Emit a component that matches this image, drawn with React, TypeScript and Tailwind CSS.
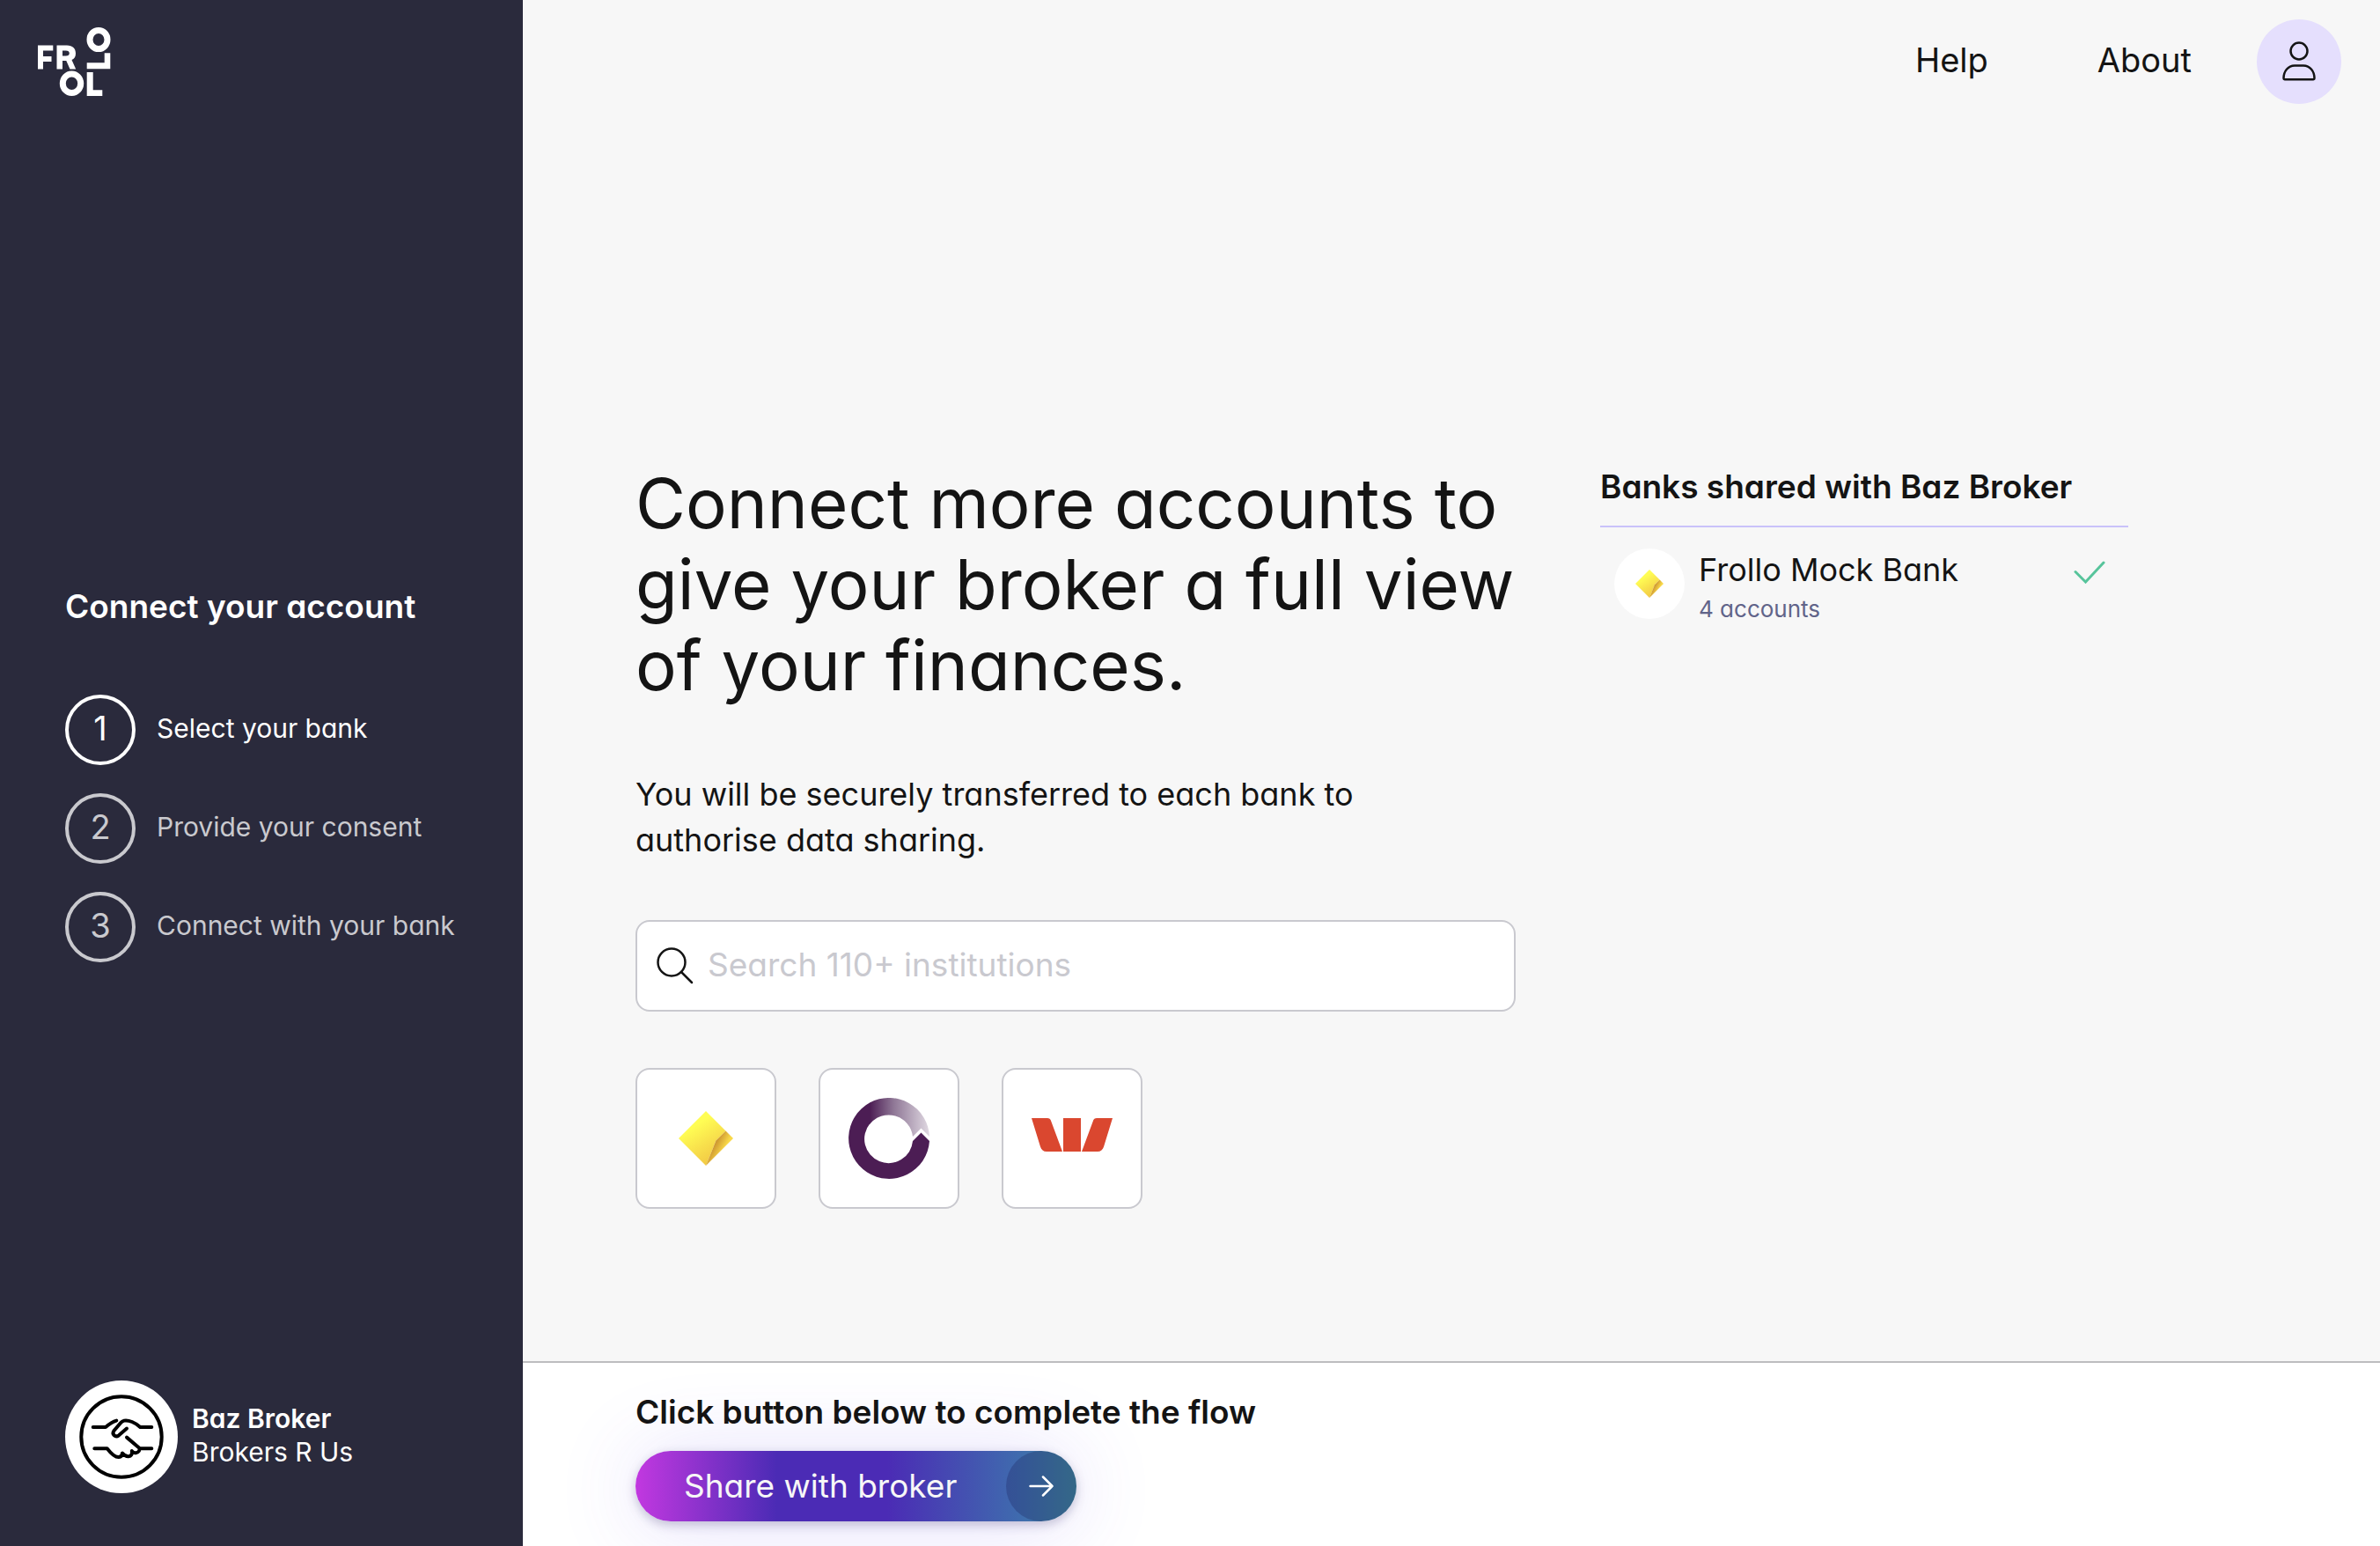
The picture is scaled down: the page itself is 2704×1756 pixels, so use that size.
import { useState } from "react";

const STEPS = ["Select your bank", "Provide your consent", "Connect with your bank"];

const FrolloLogo = () => (
    <svg viewBox="0 0 84 80" className="w-[84px] h-20" role="img" aria-label="Frollo">
        <g fill="#ffffff">
            <path d="M0 21.500h17.300v6H6v6.500h9.500v6H6v8.500H0z" />
            <path fillRule="evenodd" d="M21.500 21.500H33c6.500 0 10 3.500 10 9.200 0 4-1.800 6.300-4.500 7.300l4.700 10.500h-6.700L32.300 39h-4.300v9.500h-6.500zM28 27.500v6h3.800c2.600 0 4-1 4-3s-1.400-3-4-3z" />
            <path d="M82.300 30.300v18H55.700v-7h20v-11z" />
            <path d="M55.700 52h7v20.300h10.600V79H55.700z" />
        </g>
        <g fill="none" stroke="#ffffff" strokeWidth="7">
            <ellipse cx="38.500" cy="64.700" rx="10.200" ry="10.800" />
            <ellipse cx="69" cy="15" rx="10" ry="10.600" />
        </g>
    </svg>
);

const HandshakeIcon = () => (
    <svg viewBox="0 0 96 96" className="w-24 h-24" fill="none" stroke="#000000" strokeWidth="4" strokeLinecap="round" strokeLinejoin="round" aria-hidden="true">
        <circle cx="48" cy="48" r="45.700" />
        <path d="M15.700 37H30c4-3.500 7-6 12.300-7.400" />
        <path d="M82.300 37H69.300C64 32 56 28.500 51 29.600c-2 .5-3 1.400-4 2.600l-7.700 9.100c-2.500 3.500 1.700 8 5.700 5l9-7.700" />
        <path d="M54 48.600l14.300 12.100c1 2-.5 5-4 5.600-2 .2-3.500-.8-4.500-2.300.8 3.500-.8 6-3.800 6.200-3 .2-5-1.200-7-3.700-.2 2.500-1.500 4.300-4 4.600-4.500.4-8.500-3.600-13.300-9.800H17.300M69.300 61.300h13" />
    </svg>
);

const UserIcon = () => (
    <svg viewBox="0 0 40 46" className="w-10 h-[46px]" fill="none" stroke="#141414" strokeWidth="2.500" strokeLinejoin="round" aria-hidden="true">
        <circle cx="20" cy="11" r="9.500" />
        <path d="M2.500 42c0-8 5-14.500 12.500-14.500h10c7.500 0 12.500 6.500 12.500 14.500 0 .8-.5 1.200-1.200 1.200H3.700c-.7 0-1.200-.4-1.200-1.200z" />
    </svg>
);

interface DiamondLogoProps {
    className: string;
    id: string;
}

const DiamondLogo = ({ className, id }: DiamondLogoProps) => (
    <svg viewBox="0 0 62 62" className={className} aria-hidden="true">
        <defs>
            <linearGradient id={`${id}-face`} x1="0.3" y1="0.2" x2="0.7" y2="0.9">
                <stop offset="0.1" stopColor="#fffd54" />
                <stop offset="0.6" stopColor="#f8e04c" />
                <stop offset="1" stopColor="#f3cb45" />
            </linearGradient>
            <linearGradient id={`${id}-fold`} x1="0.3" y1="0.3" x2="0.65" y2="0.55">
                <stop offset="0" stopColor="#c58a2c" />
                <stop offset="1" stopColor="#f9d949" />
            </linearGradient>
        </defs>
        <path d="M31 0L53.500 22.500 42.500 33.500 31 62 0 31z" fill={`url(#${id}-face)`} />
        <path d="M53.500 22.500L62 31 31 62 42.500 33.500z" fill={`url(#${id}-fold)`} />
    </svg>
);

const RingLogo = () => (
    <svg viewBox="0 0 92 92" className="w-[92px] h-[92px]" aria-hidden="true">
        <defs>
            <linearGradient id="ring-fade" gradientUnits="userSpaceOnUse" x1="24" y1="0" x2="92" y2="0">
                <stop offset="0" stopColor="#4c1d54" />
                <stop offset="0.4" stopColor="#8f7796" />
                <stop offset="1" stopColor="#e0d9e2" />
            </linearGradient>
        </defs>
        <path d="M24 5.600A46 46 0 0 1 92 44L82.500 34.500 73 44A27.500 27.500 0 0 0 24 30z" fill="url(#ring-fade)" />
        <path d="M24.500 5.300A46 46 0 1 0 92 49L82.500 39.500 73 49A27.500 27.500 0 1 1 24.500 29z" fill="#4c1d54" />
    </svg>
);

const WestpacLogo = () => (
    <svg viewBox="0 0 92 38" className="w-[92px] h-[38px]" fill="#da472f" aria-hidden="true">
        <path d="M0 0h18c2.500 0 3.600 1.500 4.200 3.500L35 38H17c-3.500 0-6-2-7-5.500z" />
        <path d="M36 0h20v38H36z" />
        <path d="M92 0H74c-2.500 0-3.600 1.500-4.200 3.500L57 38h18c3.500 0 6-2 7-5.500z" />
    </svg>
);

const INSTITUTIONS = [
    { name: "Commonwealth Bank", logo: <DiamondLogo id="tile" className="w-[62px] h-[62px]" /> },
    { name: "Ring Bank",         logo: <RingLogo /> },
    { name: "Westpac",           logo: <div className="pb-2"><WestpacLogo /></div> },
];

const Sidebar = () => (
    <aside className="w-[594px] shrink-0 bg-[#2a2a3c] text-white flex flex-col justify-between pt-[30px] pb-[60px]">
        <div className="pl-[43px]">
            <FrolloLogo />
        </div>

        <div className="pt-20 pl-[74px]">
            <h2 className="text-[37px] leading-[48px] font-semibold mb-[76px]">Connect your account</h2>
            <ol className="flex flex-col gap-8">
                {STEPS.map((label, i) => (
                    <li key={label} className={`flex items-center gap-6 ${i === 0 ? "text-white" : "text-[#c9c9ce]"}`}>
                        <span className="w-20 h-20 pb-1 rounded-full border-4 border-current flex items-center justify-center text-[38px] leading-[48px]">
                            {i + 1}
                        </span>
                        <span className="text-[30px] leading-[40px] pb-1">{label}</span>
                    </li>
                ))}
            </ol>
        </div>

        <div className="pl-[74px] flex items-center gap-4">
            <div className="w-32 h-32 rounded-full bg-white flex items-center justify-center">
                <HandshakeIcon />
            </div>
            <div className="text-[30px] leading-[38px] pb-1">
                <p className="font-semibold">Baz Broker</p>
                <p>Brokers R Us</p>
            </div>
        </div>
    </aside>
);

const SharedBanks = () => (
    <section className="w-[600px]">
        <h2 className="text-[37px] leading-[54px] font-semibold pb-[17px] border-b-2 border-[#c9c2fa]">
            Banks shared with Baz Broker
        </h2>
        <div className="flex items-start pt-6 pl-4 pr-[26px]">
            <div className="w-20 h-20 rounded-full bg-white flex items-center justify-center">
                <DiamondLogo id="shared" className="w-8 h-8" />
            </div>
            <div className="pl-4 flex-1">
                <p className="text-[36px] leading-[48px]">Frollo Mock Bank</p>
                <p className="text-[26px] leading-[42px] text-[#616489]">4 accounts</p>
            </div>
            <svg viewBox="0 0 36 26" className="w-9 h-[26px] mt-3.5" fill="none" stroke="#57c49b" strokeWidth="3" strokeLinecap="round" aria-label="Connected">
                <path d="M2 12.500L13.500 24 34 2" />
            </svg>
        </div>
    </section>
);

export default function App() {
    const [query, setQuery] = useState("");

    return (
        <div className="flex min-h-screen bg-[#f7f7f7] text-[#141414] font-['Inter','Liberation_Sans',sans-serif] [font-feature-settings:'cv11']">
            <Sidebar />

            <div className="flex-1 min-w-0 flex flex-col">
                <header className="flex items-center justify-end pt-[22px] pr-11">
                    <nav className="flex gap-[124px] pr-[74px] pb-1 text-[38px] leading-[48px]">
                        <a href="#help">Help</a>
                        <a href="#about">About</a>
                    </nav>
                    <button className="w-24 h-24 rounded-full bg-[#e5dffd] flex items-center justify-center" aria-label="Profile">
                        <UserIcon />
                    </button>
                </header>

                <main className="flex-1 pl-32 pt-[408px] pb-24">
                    <div className="flex items-start gap-24">
                        <div className="w-[1000px]">
                            <h1 className="text-[78px] leading-[92px]">
                                Connect more accounts to give your broker a full view of your finances.
                            </h1>
                            <p className="text-[36px] leading-[52px] w-[880px] pt-[74px] pb-[65px]">
                                You will be securely transferred to each bank to authorise data sharing.
                            </p>
                            <label className="flex items-center gap-4 h-[104px] px-[22px] rounded-2xl border-2 border-[#c9c9cf] bg-white">
                                <svg viewBox="0 0 42 42" className="w-[42px] h-[42px]" fill="none" stroke="#141414" strokeWidth="2.500" strokeLinecap="round" aria-hidden="true">
                                    <circle cx="17" cy="17" r="15.500" />
                                    <path d="M28 28L40 40" />
                                </svg>
                                <input
                                    type="text"
                                    value={query}
                                    onChange={(e) => setQuery(e.target.value)}
                                    placeholder="Search 110+ institutions"
                                    aria-label="Search institutions"
                                    className="flex-1 min-w-0 pb-0.5 outline-none text-[37px] leading-[48px] placeholder:text-[#c9c9cf]"
                                />
                            </label>
                            <div className="flex gap-12 pt-16">
                                {INSTITUTIONS.map((item) => (
                                    <button
                                        key={item.name}
                                        aria-label={item.name}
                                        className="w-40 h-40 rounded-2xl border-2 border-[#c9c9cf] bg-white flex items-center justify-center"
                                    >
                                        {item.logo}
                                    </button>
                                ))}
                            </div>
                        </div>
                        <SharedBanks />
                    </div>
                </main>

                <footer className="bg-white border-t-2 border-[#bdbdbf] pl-32 pt-8 pb-7">
                    <p className="text-[37px] leading-[48px] font-semibold pb-5">Click button below to complete the flow</p>
                    <button className="flex items-center justify-between w-[501px] h-20 pl-[55px] rounded-full text-[37px] leading-[48px] text-[#f7f7f7] bg-[linear-gradient(90deg,#c238e0_0%,#4b2bb5_32%,#4b2bb5_57%,#3f6bae_87%,#3f849c_100%)] shadow-[0_4px_12px_rgba(40,30,90,0.25),0_4px_96px_rgba(100,70,240,0.18)]">
                        Share with broker
                        <span className="w-20 h-20 rounded-full bg-[#14144a]/25 flex items-center justify-center">
                            <svg viewBox="0 0 28 24" className="w-7 h-6" fill="none" stroke="#ffffff" strokeWidth="2.500" strokeLinecap="round" strokeLinejoin="round" aria-hidden="true">
                                <path d="M1.500 12h25M16 1.500L26.500 12 16 22.500" />
                            </svg>
                        </span>
                    </button>
                </footer>
            </div>
        </div>
    );
}
